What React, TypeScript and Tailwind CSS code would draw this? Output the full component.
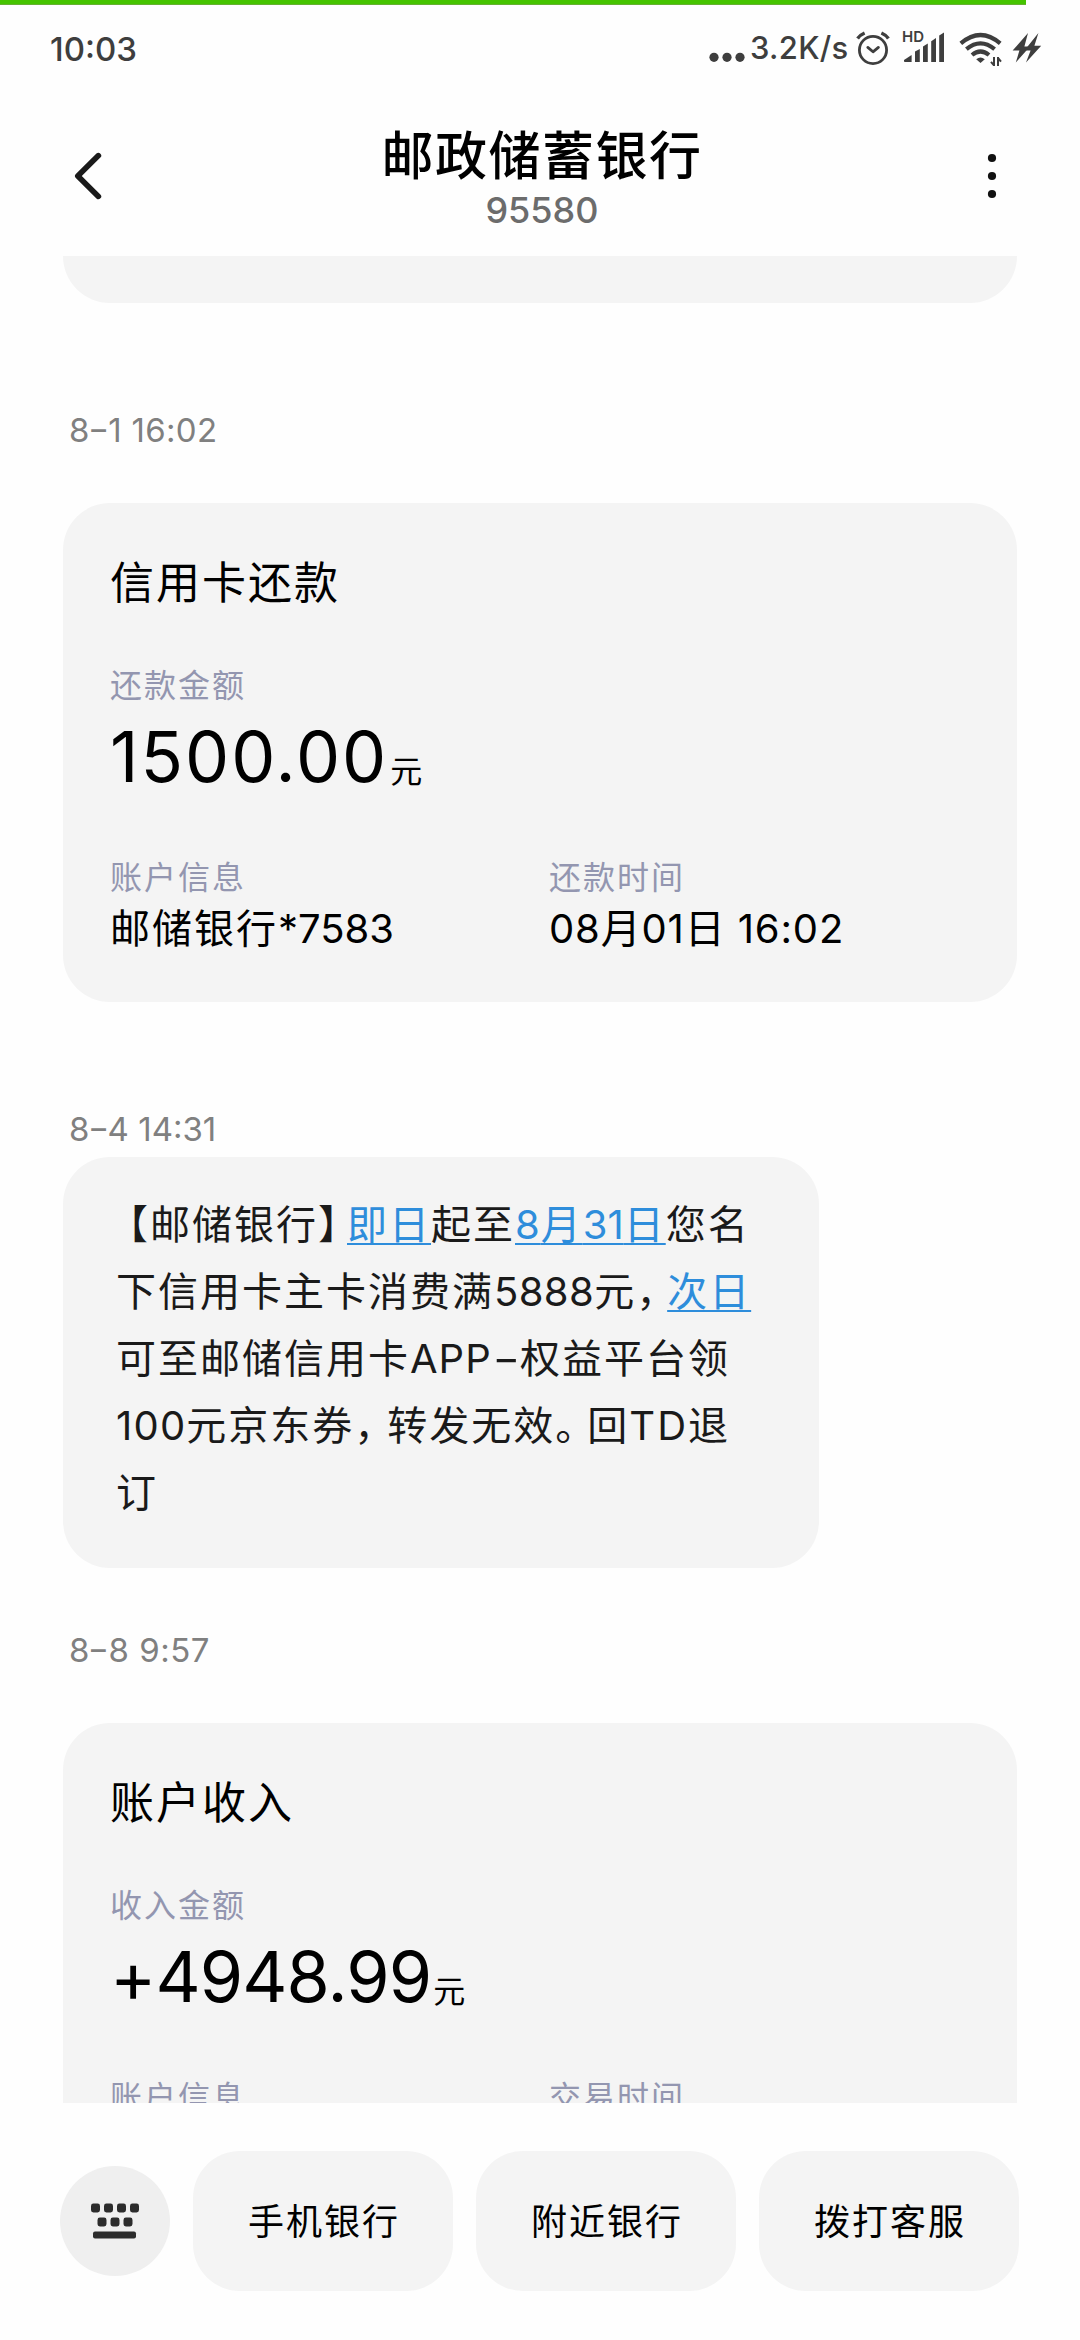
import React from "react";

type BillCardProps = {
  title: string;
  amountLabel: string;
  amount: string;
  amountClass: string;
  details: { label: string; value: React.ReactNode }[];
};

function StatusBar() {
  return (
    <div className="flex h-[93px] items-start justify-between pl-[50px] pr-[38px] text-[#3e3e3e]">
      <span className="mt-[24px] text-[33px] leading-[40px] font-medium">10:03</span>

      <div className="mt-[19px] flex h-[44px]">
        <svg width="36" height="44" fill="currentColor">
          <circle cx="5" cy="33.3" r="4.6" />
          <circle cx="18" cy="33.3" r="4.6" />
          <circle cx="31" cy="33.3" r="4.6" />
        </svg>
        <span className="mt-[4px] ml-[5px] w-[97px] text-[31px] leading-[40px] font-medium tracking-[0.3px] whitespace-nowrap">3.2K/s</span>

        {/* Alarm */}
        <svg className="ml-[8px]" width="36" height="44" fill="none" stroke="currentColor" strokeWidth="2.8" strokeLinecap="round" strokeLinejoin="round">
          <circle cx="18" cy="26" r="13.6" />
          <path d="M12.8 23.4 L18 27.8 L23.4 23.4" />
          <path d="M2.6 14.4 Q5 11 9.6 9" strokeWidth="3.4" strokeLinecap="butt" />
          <path d="M33.4 14.4 Q31 11 26.4 9" strokeWidth="3.4" strokeLinecap="butt" />
        </svg>

        {/* HD signal */}
        <div className="relative ml-[11px] w-[43px]">
          <svg width="43" height="44" fill="currentColor">
            <path d="M2 36 L9.6 31 V38 H2.8 Q2 38 2 37 Z" />
            <path d="M13 27.4 L17.8 25 V38 H13 Z" />
            <path d="M21 22.4 L25.8 19.4 V38 H21 Z" />
            <path d="M29.2 17.2 L34 14 V38 H29.2 Z" />
            <path d="M37.2 11.4 L42 8.6 V38 H37.2 Z" />
          </svg>
          <span className="absolute top-[5px] left-0 text-[15px] leading-[16px] font-semibold">HD</span>
        </div>

        {/* Wifi */}
        <svg className="ml-[14px]" width="44" height="44" fill="none" stroke="currentColor" strokeWidth="4.2">
          <path d="M1.8 19.4 Q21.5 2.6 41.2 19.4" />
          <path d="M7.4 25.2 Q21.5 13.4 35.6 25.2" />
          <path d="M13 31 Q21.5 24 30 31" />
          <path d="M17.2 35.2 Q21.5 32 25.8 35.2 L21.5 39 Z" fill="currentColor" stroke="none" />
          <path d="M35 42 V33 M32 37.8 L35 41.4 M39 33 V42 M39 34 L42 37.6" strokeWidth="2" />
        </svg>

        {/* Charging */}
        <svg className="ml-[9px]" width="30" height="44" fill="currentColor">
          <path d="M16 9 L0.6 26.6 L7.4 26.6 L3.8 38.6 L18 22.4 L12.4 22.4 Z" />
          <path d="M26.4 9 L12.4 26.6 L18.6 26.6 L14 38.6 L29.2 21.8 L22.4 21.8 Z" />
        </svg>
      </div>
    </div>
  );
}

function Header() {
  return (
    <div className="flex h-[158px] items-start justify-between pl-[73px] pr-[82px]">
      <svg className="mt-[52px]" width="32" height="52" fill="none" stroke="#1a1a1a" strokeWidth="5.6" strokeLinecap="round" strokeLinejoin="round">
        <path d="M25.4 5.6 L4.8 26 L25.4 46.4" />
      </svg>
      <div className="mr-[7px] flex flex-col items-center">
        <h1 className="mt-[29px] text-[52px] leading-[60px] font-medium tracking-[1.5px] text-black">邮政储蓄银行</h1>
        <p className="mt-[3px] text-[36px] leading-[40px] font-medium text-[#6c6c6c]">95580</p>
      </div>
      <svg className="mt-[52px]" width="12" height="52" fill="#111">
        <circle cx="6" cy="8" r="4.1" />
        <circle cx="6" cy="26" r="4.1" />
        <circle cx="6" cy="44" r="4.1" />
      </svg>
    </div>
  );
}

function Timestamp({ day, time, className }: { day: string; time: string; className: string }) {
  const [month, date] = day.split("-");
  return (
    <div className={`h-[40px] pl-[6px] text-[33px] leading-[40px] text-[#808080] ${className}`}>
      {month}
      <span className="mx-[1.5px] inline-block -translate-y-[1px] scale-x-[1.4]">-</span>
      {date} {time}
    </div>
  );
}

function BillCard({ title, amountLabel, amount, amountClass, details }: BillCardProps) {
  return (
    <div className="mt-[53px] h-[499px] w-[954px] shrink-0 rounded-[47px] bg-[#f4f4f4] pt-[50px] pl-[47px]">
      <h2 className="text-[44px] leading-[60px] tracking-[2px] text-black">{title}</h2>
      <p className="mt-[53px] text-[32px] leading-[40px] tracking-[2px] text-[#9396b0]">{amountLabel}</p>
      <div className="mt-[15px] flex h-[72px] text-black">
        <span className={`text-[70px] leading-[72px] ${amountClass}`}>{amount}</span>
        <span className="mt-[31px] ml-[2px] text-[32px] leading-[40px]">元</span>
      </div>
      <div className="mt-[65px] flex">
        {details.map((d) => (
          <div key={d.label} className="w-[439px]">
            <p className="text-[32px] leading-[40px] tracking-[2px] text-[#9396b0]">{d.label}</p>
            <p className="mt-[6px] text-[40px] leading-[50px] whitespace-nowrap text-black">{d.value}</p>
          </div>
        ))}
      </div>
    </div>
  );
}

function DateLink({ children }: { children: React.ReactNode }) {
  return (
    <a className="text-[#2e8ddb] underline decoration-2 underline-offset-[4px] [text-decoration-skip-ink:none]">{children}</a>
  );
}

// Half-width punctuation, padded to the width it takes in the line
function Mark({ className, children }: { className: string; children: React.ReactNode }) {
  return <span className={`inline-block [font-feature-settings:'halt'] ${className}`}>{children}</span>;
}

function MessageBubble() {
  return (
    <div className="mt-[8px] h-[411px] w-[756px] shrink-0 rounded-[47px] bg-[#f4f4f4] pt-[34px] pl-[53px] text-[40px] leading-[67px] tracking-[2px] whitespace-nowrap text-[#1a1a1a]">
      <p>
        <Mark className="pl-[12px]">【</Mark>邮储银行<Mark className="pr-[7px]">】</Mark>
        <DateLink>即日</DateLink>起至
        <DateLink>
          <span className="tracking-[1px]">8</span>月<span className="tracking-normal">31</span>日
        </DateLink>
        您名
      </p>
      <p>
        下信用卡主卡消费满<span className="tracking-[0.4px]">5888</span>元<Mark className="pr-[9px]">，</Mark>
        <DateLink>次日</DateLink>
      </p>
      <p>
        可至邮储信用卡<span className="tracking-[1px]">APP</span>
        <span className="mx-[5px] inline-block scale-x-[1.5] tracking-normal">-</span>权益平台领
      </p>
      <p>
        <span className="tracking-[1.2px]">100</span>元京东券<Mark className="pr-[11px]">，</Mark>转发无效
        <Mark className="pr-[10px]">。</Mark>回<span className="tracking-[2px]">TD</span>退
      </p>
      <p>订</p>
    </div>
  );
}

function KeyboardButton() {
  return (
    <button className="flex size-[110px] items-center justify-center rounded-full bg-[#efefef]">
      <svg width="48" height="36" fill="#2c2c2c">
        <rect x="0" y="0.5" width="9" height="9" rx="2.4" />
        <rect x="13" y="0.5" width="9" height="9" rx="2.4" />
        <rect x="26" y="0.5" width="9" height="9" rx="2.4" />
        <rect x="39" y="0.5" width="9" height="9" rx="2.4" />
        <rect x="6.5" y="14.5" width="9" height="9" rx="2.4" />
        <rect x="19.5" y="14.5" width="9" height="9" rx="2.4" />
        <rect x="32.5" y="14.5" width="9" height="9" rx="2.4" />
        <rect x="2" y="28.5" width="43" height="7" rx="2" />
      </svg>
    </button>
  );
}

const menuItems = ["手机银行", "附近银行", "拨打客服"];

export default function App() {
  return (
    <div className="flex h-[2340px] w-[1080px] flex-col overflow-hidden bg-[#fefefe] font-[Inter,'Noto_Sans_CJK_SC',sans-serif]">
      {/* Progress strip */}
      <div className="h-[5px] w-[1026px] border-b border-[#66b032] bg-[#45c400]" />
      <StatusBar />
      <Header />

      {/* Conversation */}
      <div className="flex h-[1847px] flex-col overflow-hidden pl-[63px]">
        <div className="h-[47px] w-[954px] shrink-0 rounded-b-[47px] bg-[#f4f4f4]" />

        <Timestamp day="8-1" time="16:02" className="mt-[107px] tracking-[0.3px]" />
        <BillCard
          title="信用卡还款"
          amountLabel="还款金额"
          amount="1500.00"
          amountClass="tracking-[2px]"
          details={[
            { label: "账户信息", value: <><span className="tracking-[2px]">邮储银行</span>*7583</> },
            { label: "还款时间", value: <span className="tracking-[0.85px]">08月01日 16:02</span> },
          ]}
        />

        <Timestamp day="8-4" time="14:31" className="mt-[107px]" />
        <MessageBubble />

        <Timestamp day="8-8" time="9:57" className="mt-[62px] tracking-[0.5px]" />
        <BillCard
          title="账户收入"
          amountLabel="收入金额"
          amount="+4948.99"
          amountClass="tracking-[-0.9px]"
          details={[
            { label: "账户信息", value: "" },
            { label: "交易时间", value: "" },
          ]}
        />
      </div>

      {/* Bottom menu */}
      <div className="flex items-center gap-[23px] pt-[48px] pl-[60px]">
        <KeyboardButton />
        {menuItems.map((item) => (
          <button key={item} className="h-[140px] w-[260px] rounded-[47px] bg-[#f4f4f4] pt-[2px] pl-[2px] text-[36px] tracking-[2px] text-black">
            {item}
          </button>
        ))}
      </div>
    </div>
  );
}
